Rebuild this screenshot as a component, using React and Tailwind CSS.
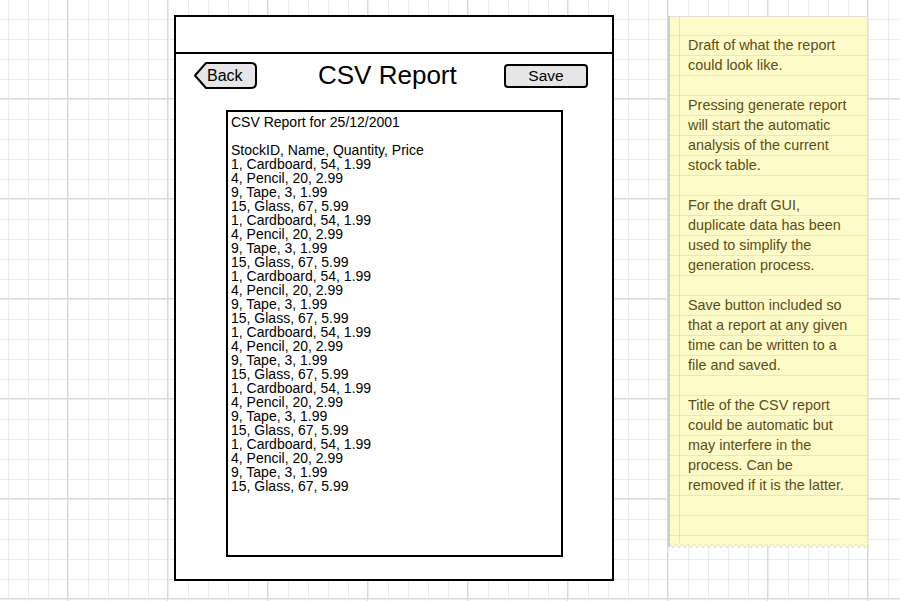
import React from 'react';

const rows = [
  '1, Cardboard, 54, 1.99',
  '4, Pencil, 20, 2.99',
  '9, Tape, 3, 1.99',
  '15, Glass, 67, 5.99',
];

const notes = [
  ['Draft of what the report', 'could look like.'],
  ['Pressing generate report', 'will start the automatic', 'analysis of the current', 'stock table.'],
  ['For the draft GUI,', 'duplicate data has been', 'used to simplify the', 'generation process.'],
  ['Save button included so', 'that a report at any given', 'time can be written to a', 'file and saved.'],
  ['Title of the CSV report', 'could be automatic but', 'may interfere in the', 'process. Can be', 'removed if it is the latter.'],
];

const zigzag = () => {
  let d = 'M0,0 H200 V1';
  for (let x = 200; x > 0; x -= 6) {
    d += ` L${x - 3},5 L${x - 6},1`;
  }
  return d + ' Z';
};

const BackButton = () => (
  <div className="relative mt-[8px] ml-[17px] w-[64px] h-[27px] shrink-0">
    <svg className="absolute inset-0" width="64" height="27" viewBox="0 0 64 27">
      <path d="M2,13.5 L13,1 H58 Q63,1 63,6 V21 Q63,26 58,26 H13 Z" fill="#e6e6e6" stroke="#000" strokeWidth="2" strokeLinejoin="round" />
    </svg>
    <div className="relative h-full flex items-center pl-[14px] text-[16px] leading-none text-black">Back</div>
  </div>
);

export default function App() {
  const lines = [0, 1, 2, 3, 4, 5].flatMap(() => rows);

  return (
    <div className="w-[900px] h-[601px] overflow-hidden flex items-start bg-white font-['Liberation_Sans',Arial,sans-serif] bg-[linear-gradient(to_right,#d9d9d9_1px,transparent_1px),linear-gradient(to_bottom,#d9d9d9_1px,transparent_1px),linear-gradient(to_right,#ebebeb_1px,transparent_1px),linear-gradient(to_bottom,#ebebeb_1px,transparent_1px)] bg-[size:100px_100px,100px_100px,20px_20px,20px_20px] bg-[position:67px_0,0_98px,8px_0,0_19px]">
      <div className="ml-[174px] mt-[15px] w-[440px] h-[566px] border-2 border-black bg-white flex flex-col shrink-0">
        <div className="h-[37px] border-b-2 border-black shrink-0" />
        <div className="h-[56px] flex items-start shrink-0">
          <BackButton />
          <div className="ml-[61px] mt-[8px] text-[26px] leading-[26px] text-black">CSV Report</div>
          <div className="ml-auto mr-[24px] mt-[10px] w-[84px] h-[24px] rounded-[4px] border-2 border-black bg-[#e6e6e6] flex items-center justify-center text-[15.5px] leading-none text-black">
            Save
          </div>
        </div>
        <div className="ml-[50px] w-[337px] h-[447px] border-2 border-black px-[3px] pt-[3px] text-[14px] leading-[14px] text-black">
          <div>CSV Report for 25/12/2001</div>
          <div className="h-[14px]" />
          <div>StockID, Name, Quantity, Price</div>
          {lines.map((l, i) => (
            <div key={i}>{l}</div>
          ))}
        </div>
      </div>

      <div className="ml-[54px] mt-[16px] w-[200px] shrink-0">
        <div className="h-[527px] bg-[#fdfbc8] border-l-2 border-l-[#cfcfcf] border-t border-t-[#dedede] border-r border-r-[#dedede] pl-[18px] pt-[18px] text-[14.4px] leading-[20px] text-[#5e4c17] bg-[linear-gradient(to_right,transparent_9px,#f5dcae_9px,#f5dcae_10px,transparent_10px),linear-gradient(to_bottom,#ece6b2_1px,transparent_1px)] bg-[size:100%_100%,100%_20px] bg-[position:0_0,0_18px]">
          {notes.map((p, i) => (
            <div key={i} className={i > 0 ? 'mt-[20px]' : ''}>
              {p.map((t, j) => (
                <div key={j} className="whitespace-nowrap">{t}</div>
              ))}
            </div>
          ))}
        </div>
        <svg width="200" height="6" viewBox="0 0 200 6" className="block">
          <path d={zigzag()} fill="#fdfbc8" stroke="#d6d6c0" strokeWidth="0.8" />
          <rect x="0" y="0" width="200" height="1.2" fill="#fdfbc8" />
          <rect x="0" y="0" width="2" height="4" fill="#cfcfcf" />
        </svg>
      </div>
    </div>
  );
}
